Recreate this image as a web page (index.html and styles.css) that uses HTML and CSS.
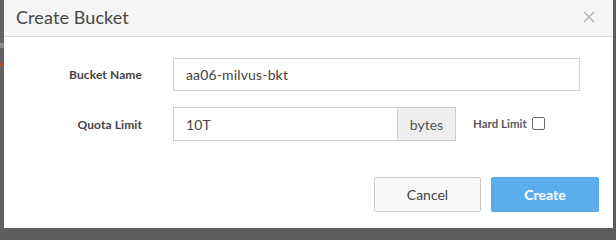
FILE: index.html
```html
<!DOCTYPE html>
<html lang="en">
<head>
<meta charset="utf-8">
<title>Create Bucket</title>
<link rel="stylesheet" href="styles.css">
</head>
<body>
<div class="backdrop">
  <div class="page-strip">
    <span class="strip-mark grey"></span>
    <span class="strip-mark red"></span>
  </div>
  <div class="modal">
    <div class="modal-header">
      <h1 class="modal-title">Create Bucket</h1>
      <button class="close-btn" aria-label="Close">
        <svg width="12" height="12" viewBox="0 0 12 12"><path d="M1 1L11 11M11 1L1 11" stroke="#b3b3b3" stroke-width="1.3" fill="none"/></svg>
      </button>
    </div>
    <div class="modal-body">
      <label class="field-label">Bucket Name</label>
      <div class="field"><input class="text-input full" type="text" value="aa06-milvus-bkt"></div>
      <label class="field-label">Quota Limit</label>
      <div class="field">
        <div class="input-group">
          <input class="text-input quota" type="text" value="10T">
          <span class="addon">bytes</span>
        </div>
        <label class="hard-limit">Hard Limit <span class="checkbox"></span></label>
      </div>
    </div>
    <div class="modal-footer">
      <button class="btn btn-cancel">Cancel</button>
      <button class="btn btn-create">Create</button>
    </div>
  </div>
  <div class="page-strip right"></div>
</div>
</body>
</html>
```
FILE: styles.css
```css
* { box-sizing: border-box; }
html, body { margin: 0; padding: 0; }
body {
  width: 616px;
  height: 230px;
  background: #5e5e5e;
  font-family: Lato, "Open Sans", "Liberation Sans", sans-serif;
  overflow: hidden;
}
.backdrop {
  display: flex;
  height: 230px;
}
.page-strip {
  width: 4px;
  display: flex;
  flex-direction: column;
  background: #626262;
}
.page-strip.right { width: 3px; background: #5a5a5a; }
.strip-mark { display: block; width: 4px; }
.strip-mark.grey { margin-top: 43px; height: 5px; background: #8a8a8a; }
.strip-mark.red { margin-top: 15px; height: 3px; background: #b54a2c; }
.modal {
  width: 609px;
  height: 228px;
  background: #fff;
  display: flex;
  flex-direction: column;
}
.modal-header {
  height: 37px;
  background: #f5f5f5;
  border-bottom: 1px solid #dcdcdc;
  display: flex;
  align-items: center;
  justify-content: space-between;
  padding: 0 18px 2px 12px;
}
.modal-title {
  margin: 0;
  font-size: 18px;
  font-weight: 400;
  color: #474747;
  letter-spacing: 0.1px;
}
.close-btn {
  border: 0;
  background: none;
  padding: 0;
  width: 12px;
  height: 12px;
  display: flex;
}
.modal-body {
  display: grid;
  grid-template-columns: 138px 407px;
  column-gap: 31px;
  row-gap: 16px;
  padding-top: 21px;
  align-items: center;
}
.field-label {
  text-align: right;
  font-size: 12px;
  font-weight: 700;
  letter-spacing: 0.1px;
  color: #444;
}
.field { display: flex; align-items: center; }
.text-input {
  height: 33px;
  border: 1px solid #cfcfcf;
  padding: 0 12px;
  font-family: inherit;
  font-size: 14px;
  letter-spacing: 0.15px;
  color: #444;
  background: #fff;
  outline: none;
}
.text-input.full { width: 407px; }
.input-group { display: flex; }
.text-input.quota { width: 224px; height: 34px; border-right: 0; }
.addon {
  width: 59px;
  height: 34px;
  background: #eeeeee;
  border: 1px solid #cfcfcf;
  display: flex;
  align-items: center;
  justify-content: center;
  font-size: 14px;
  color: #555;
}
.hard-limit {
  margin-left: 17px;
  display: flex;
  align-items: center;
  gap: 5px;
  font-size: 11.5px;
  font-weight: 700;
  color: #5a5a5a;
  margin-top: -2px;
}
.checkbox {
  width: 13px;
  height: 13px;
  border: 1px solid #6a6a6a;
  border-radius: 2px;
  background: #fff;
}
.modal-footer {
  display: flex;
  justify-content: flex-end;
  gap: 10px;
  padding: 36px 14px 0 0;
}
.btn {
  height: 35px;
  border-radius: 2px;
  font-family: inherit;
  font-size: 14px;
  padding: 0;
}
.btn-cancel {
  width: 107px;
  background: #f8f8f8;
  border: 1px solid #cccccc;
  color: #444;
}
.btn-create {
  width: 108px;
  background: #5aaeee;
  border: 1px solid #54a8ea;
  color: #fff;
  font-weight: 700;
}
```
